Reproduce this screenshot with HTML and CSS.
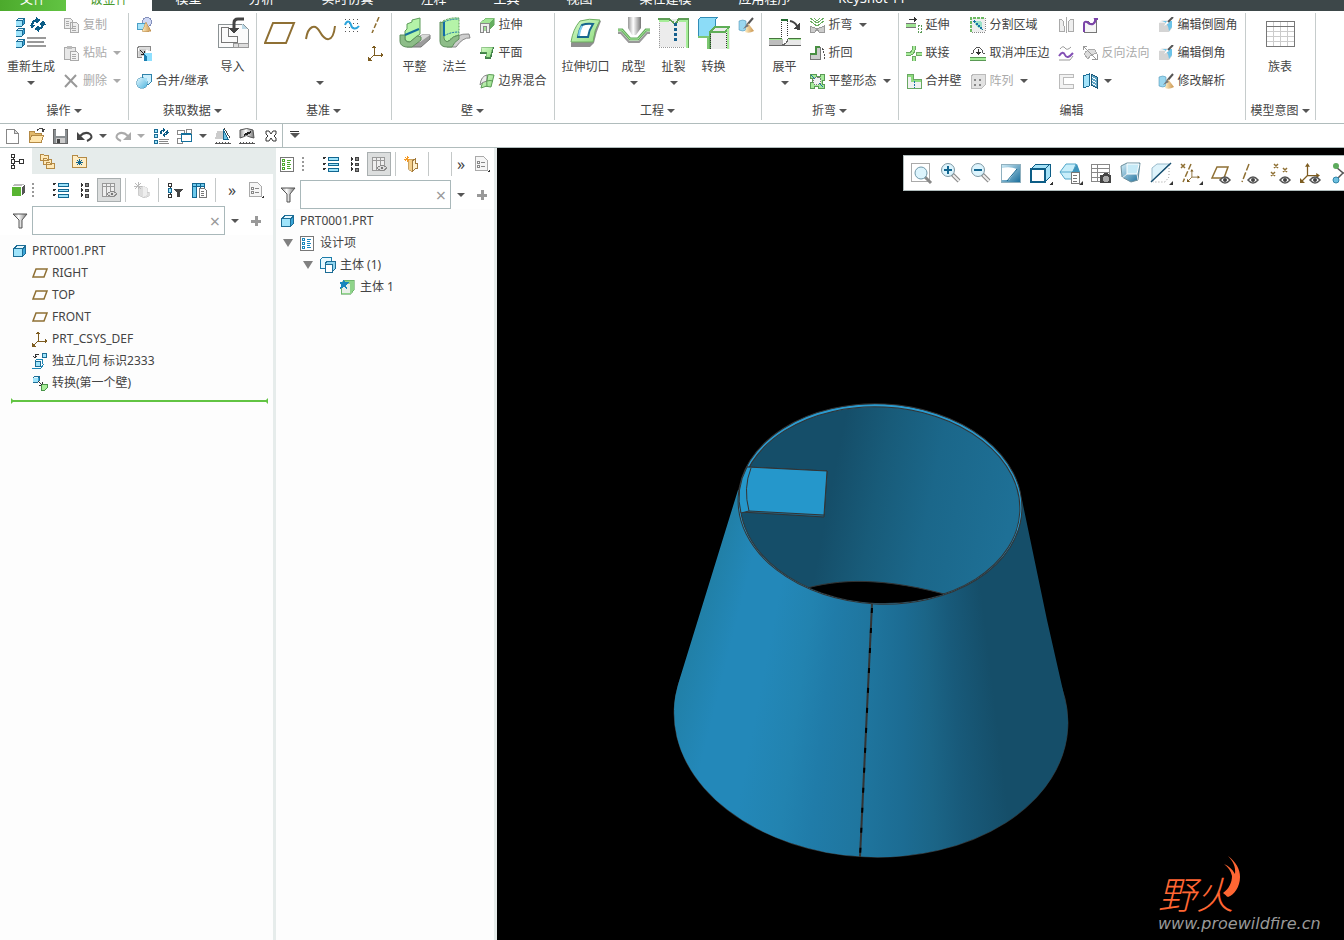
FILE: index.html
```html
<!DOCTYPE html>
<html lang="zh-CN">

<head>
    <meta charset="UTF-8">
    <title>PRT0001</title>
    <link rel="stylesheet" href="styles.css">
</head>

<body>
    <!--图标库-->
    <svg class="sprite" aria-hidden="true">
        <defs>
            <linearGradient id="g-steel"><stop offset="0" stop-color="#999" /><stop offset=".4" stop-color="#fff" /><stop offset="1" stop-color="#777" /></linearGradient>
            <linearGradient id="g-blue" x2="1" y2="1"><stop offset="0" stop-color="#e4f8ff" /><stop offset="1" stop-color="#4db3dd" /></linearGradient>
            <linearGradient id="g-deep" x2="1" y2="1"><stop offset="0" stop-color="#d5f0fa" /><stop offset="1" stop-color="#1c6f9c" /></linearGradient>
            <linearGradient id="g-tan" x2="1" y2="0"><stop offset="0" stop-color="#ffeec2" /><stop offset="1" stop-color="#c8924b" /></linearGradient>
            <linearGradient id="g-green" x2="1" y2="1"><stop offset="0" stop-color="#d8fbcb" /><stop offset="1" stop-color="#8fdc80" /></linearGradient>
        </defs>
        <symbol id="cube" viewBox="0 0 16 16">
            <path d="M1 5l4-3h9v8l-4 4H1z" fill="#1c6d96" />
            <path d="M2 6h8v7H2z" fill="#9fe4fb" />
            <path d="M5 3h8l-3 2H3z" fill="#e6f8fe" />
            <path d="M11 6l2-2v6l-2 2z" fill="#39a5d8" />
        </symbol>
        <symbol id="spin" viewBox="0 0 16 14">
            <path d="M3 8C3 4 5 3 8 3M13 6c0 4-2 5-5 5" fill="none" stroke="#0b5c86" stroke-width="2" />
            <path d="M0 7h6l-3 4zM10 7h6l-3-4zM7 0l4 3-4 3zM9 8l-4 3 4 3z" fill="#0b5c86" />
        </symbol>
        <symbol id="regen" viewBox="0 0 32 32">
            <use href="#cube" width="11" height="11" /><use href="#cube" y="10" width="11" height="11" /><use href="#cube" y="21" width="11" height="11" />
            <use href="#spin" x="14" width="17" height="15" />
            <path d="M12 21h19M12 25h17M12 29h19" stroke="#999" stroke-width="2" />
        </symbol>
        <symbol id="regen-s" viewBox="0 0 16 16">
            <path d="M1 1h3v3H1zM1 6h3v3H1zM1 12h3v3H1z" fill="#9fe4fb" stroke="#1c6d96" />
            <use href="#spin" x="6" width="10" height="9" />
            <path d="M6 11h10M6 13h9M6 15h10" stroke="#888" />
        </symbol>
        <symbol id="copy" viewBox="0 0 16 16">
            <path d="M1 1h6l2 2v8H1zM7 5h6l2 2v8H7z" fill="#eee" stroke="#aaa" />
            <path d="M3 4h3M3 6h3M3 8h3M9 9h4M9 11h4M9 13h4" stroke="#aaa" />
        </symbol>
        <symbol id="paste" viewBox="0 0 16 16">
            <path d="M1 2h11v12H1z" fill="#e8e8e8" stroke="#aaa" />
            <path d="M4 1h5v3H4z" fill="#bbb" />
            <path d="M7 6h6l2 2v7H7z" fill="#f4f4f4" stroke="#aaa" />
            <path d="M9 9h4M9 11h4M9 13h4" stroke="#aaa" />
        </symbol>
        <symbol id="cross" viewBox="0 0 16 16"><path d="M2 2l12 12M13 2L2 14" stroke="#999" stroke-width="2" shape-rendering="auto" /></symbol>
        <symbol id="shapes" viewBox="0 0 16 16">
            <circle cx="11" cy="5" r="4.500" fill="#cfd8f4" stroke="#8490bb" />
            <path d="M1 6h8v6H1z" fill="#a6e3fa" stroke="#4b9fc5" />
            <path d="M10 5l5 9q-5 2-9 0z" fill="url(#g-tan)" stroke="#b98a4a" stroke-width=".5" />
        </symbol>
        <symbol id="shrink" viewBox="0 0 16 16">
            <path d="M1 3l3-2h10v5M1 3v9h5" fill="#ddd" stroke="#888" /><path d="M3 4h7v7H3z" fill="#ccc" />
            <path d="M4 5l4 4M8 6v3H5" stroke="#222" fill="none" />
            <path d="M8 8h8v8h-5v-5H8z" fill="#8fe0ff" /><path d="M8 8v8h3v-4z" fill="#1a7eb0" />
        </symbol>
        <symbol id="merge" viewBox="0 0 16 16">
            <path d="M6 2l2-1h7v8l-2 2H6z" fill="#cdeffc" stroke="#2f83ab" />
            <circle cx="6" cy="10" r="5.500" fill="url(#g-blue)" stroke="#2f83ab" stroke-width=".5" /><path d="M6 5h5v5" fill="#a4def5" />
        </symbol>
        <symbol id="import" viewBox="0 0 32 32">
            <path d="M1 7h25l5 5v18H1z" fill="#fbfbfb" stroke="#8b9294" />
            <path d="M4 10h7v9h9v6H4z" fill="none" stroke="#777" />
            <path d="M25 7v5h6z" fill="#bcd9e6" /><path d="M16 26h15v4H16zM21 26v4" fill="#ddd" stroke="#999" />
            <path d="M27 2H21q-4 0-4 4v8" fill="none" stroke="#444" stroke-width="3" shape-rendering="auto" /><path d="M12 11l5 6 5-6z" fill="#444" />
        </symbol>
        <symbol id="plane" viewBox="0 0 32 32"><path d="M9 6h21l-8 20H1z" fill="none" stroke="#8f7034" stroke-width="2" /></symbol>
        <symbol id="plane-s" viewBox="0 0 16 16"><path d="M4 4h11l-3 8H1z" fill="none" stroke="#8f7034" stroke-width="1.500" shape-rendering="auto" /></symbol>
        <symbol id="curve" viewBox="0 0 32 32"><path d="M2 22C4 9 11 6 16 15S29 27 31 9" fill="none" stroke="#8f7034" stroke-width="2" /></symbol>
        <symbol id="sketch" viewBox="0 0 16 16">
            <path d="M1 2h14M1 6h14M1 10h14M1 14h14" stroke="#555" stroke-dasharray="1 3" />
            <path d="M1 8c2-5 5-4 6 0s5 5 8 1" fill="none" stroke="#2aa4dc" stroke-width="2" shape-rendering="auto" />
        </symbol>
        <symbol id="axis" viewBox="0 0 16 16"><path d="M11 0L4 16" stroke="#8f7034" stroke-width="1.500" stroke-dasharray="5 2" shape-rendering="auto" /></symbol>
        <symbol id="csys" viewBox="0 0 16 16">
            <path d="M6 2v8h9M6 10l-5 5" fill="none" stroke="#7d5c20" />
            <path d="M4 3l2-3 2 3zM13 8l3 2-3 2zM0 12v4h4z" fill="#7d5c20" />
        </symbol>
        <symbol id="wall-flat" viewBox="0 0 32 32">
            <path d="M11 25l12-7h8v4l-9 8H8z" fill="#9b9b9b" stroke="#777" /><path d="M11 25l12-7h8l-10 7z" fill="#d8d8d8" />
            <path d="M8 12V7l5-2V3l8-2v16l-10 8q-4 0-5-3V14z" fill="#b5f3a8" stroke="#5d9b5b" />
            <path d="M1 18h5v4q0 3 5 3l7-6h2l2 1v3l-9 7H7q-6-1-6-6z" fill="#8dbd88" stroke="#5d8f5b" />
            <path d="M6 18l14-6" stroke="#14719d" stroke-width="2" />
        </symbol>
        <symbol id="wall-flange" viewBox="0 0 32 32">
            <path d="M9 27q8-11 21-10l1 4q-7-1-14 9H8z" fill="#cfcfcf" stroke="#888" />
            <path d="M4 4q8-4 16-3v17q-6 1-12 7l-4-3z" fill="#b5f3a8" stroke="#5d9b5b" stroke-dasharray="2 1" />
            <path d="M1 5l4 1v15q1 5 5 3 4-5 10-6v4q-5 3-7 8H8q-7 0-7-6z" fill="#8dbd88" stroke="#5d8f5b" />
            <path d="M5 5v14" stroke="#126ea8" stroke-width="2" /><path d="M5 19q6-4 15-4M5 5q6-3 15-3" fill="none" stroke="#126ea8" stroke-dasharray="2 1" />
        </symbol>
        <symbol id="extrude" viewBox="0 0 16 16">
            <path d="M1 6l6-5h8v7l-5 5H1z" fill="#a2e596" stroke="#5a9a55" stroke-width=".5" /><path d="M11 5l4-3v6l-4 4z" fill="#66ae60" /><path d="M1 6h9v9H7V9H4v6H1z" fill="#eee" stroke="#888" />
        </symbol>
        <symbol id="flat" viewBox="0 0 16 16"><path d="M3 2h12l-3 12H6l1-5H1z" fill="#3f7f49" /><path d="M3 2h11l-3 10H7l1-5H2z" fill="url(#g-green)" stroke="#5a9a55" stroke-width=".5" /></symbol>
        <symbol id="blend" viewBox="0 0 16 16" shape-rendering="auto">
            <path d="M5 4q4-4 10-2l-3 12q-5-2-10 1z" fill="url(#g-green)" stroke="#5a9a55" /><path d="M1 12Q2 3 8 2v6q-5 1-7 4z" fill="#eee" stroke="#888" />
            <path d="M8 8q3-1 6 0M9 2q-2 6-1 12" fill="none" stroke="#5a9a55" />
        </symbol>
        <symbol id="cutout" viewBox="0 0 32 32">
            <path d="M11 5q10-3 20-1-5 11-7 22l-4 4H1v-4z" fill="#8f8f8f" />
            <path d="M10 4q9-3 20-1-6 10-7 22H1Q3 12 10 4z" fill="url(#g-green)" stroke="#6eae62" />
            <path d="M12 8q5-2 11-1-4 6-5 13H8q1-7 4-12z" fill="#fff" stroke="#17668e" stroke-width="2" /><path d="M12 9q-3 5-3 10" fill="none" stroke="#7fd0ef" stroke-width="2" />
        </symbol>
        <symbol id="form" viewBox="0 0 32 32">
            <path d="M10 0h13v11l-5 7h-4l-4-7z" fill="url(#g-steel)" />
            <path d="M0 13h4l8 9h8l8-9h4" fill="none" stroke="#67a960" stroke-width="3" />
            <path d="M0 13h4l8 9h8l8-9h4" fill="none" stroke="#a9ee9c" />
            <path d="M0 16h3l8 9h10l8-9h3" fill="none" stroke="#999" stroke-width="2" />
        </symbol>
        <symbol id="rip" viewBox="0 0 32 32">
            <path d="M1 2h29v28H1z" fill="#ececec" /><path d="M1 4v26h26" fill="none" stroke="#999" stroke-dasharray="1 1" />
            <path d="M0 2h11l5 4M18 6l3-4h10" fill="none" stroke="#5f9e57" stroke-width="2" /><path d="M1 4h10M21 4h8M29 3v28" stroke="#a6ed98" stroke-width="2" /><path d="M30 3v28" stroke="#5f9e57" />
            <path d="M17 6v18" stroke="#155f8d" stroke-width="3" stroke-dasharray="3 2" />
        </symbol>
        <symbol id="convert" viewBox="0 0 32 32">
            <path d="M0 3l3-3h17l-3 3v17H0z" fill="#8cdcf7" stroke="#328db6" /><path d="M0 20h10v12" fill="none" stroke="#7dc773" stroke-width="2" />
            <path d="M12 15l5-5h15v22H12z" fill="#ececec" /><path d="M12 15l5-5h14l-4 5H12v17" fill="none" stroke="#5fae57" stroke-width="2" />
            <path d="M12 17v15M28 16v15" stroke="#333" stroke-dasharray="1 1" /><path d="M30 12v20" stroke="#a6ed98" stroke-width="2" />
        </symbol>
        <symbol id="paint" viewBox="0 0 16 16" shape-rendering="auto">
            <path d="M1 4q4-2 7 0v9q-3 2-7 0z" fill="#9ad7ef" stroke="#3c86aa" stroke-width=".5" /><path d="M15 1L9 8" stroke="#555" stroke-width="2" />
            <path d="M10 6l6 8q-5 3-9 1z" fill="url(#g-tan)" /><path d="M9 7l2 2-6 3z" fill="#777" />
        </symbol>
        <symbol id="unbend" viewBox="0 0 32 32">
            <path d="M0 22h14v6H0z" fill="#bdbdbd" /><path d="M19 22h13v6H14q3 0 5-6z" fill="#e8e8e8" />
            <path d="M0 22h13M20 22h12" stroke="#9fe693" stroke-width="2" /><path d="M0 21h13M19 21h13" stroke="#48733f" /><path d="M0 28h32M13 28q5-1 6-6" fill="none" stroke="#666" />
            <path d="M12 20V3h6v17" fill="none" stroke="#333" stroke-dasharray="1 1" /><path d="M12 3h7" stroke="#246b31" stroke-width="2" />
            <path d="M21 4q5 1 7 5" fill="none" stroke="#444" stroke-width="2" shape-rendering="auto" /><path d="M24 12l7 1V6z" fill="#444" />
        </symbol>
        <symbol id="bend" viewBox="0 0 16 16">
            <path d="M1 4l7 5 7-5M1 1l7 5 7-5M5 1l3 3 3-3" fill="none" stroke="#6cae62" /><path d="M1 9l7 3 7-3v6h-5l-2-3-2 3H1z" fill="#ccc" stroke="#999" />
        </symbol>
        <symbol id="bendback" viewBox="0 0 16 16">
            <path d="M1 9h6V2h4v12H1z" fill="#ccc" stroke="#777" /><path d="M1 9h6V2h4" fill="none" stroke="#498f43" stroke-width="2" />
            <path d="M15 14V8q0-4-3-5" fill="none" stroke="#555" stroke-dasharray="2 1" />
        </symbol>
        <symbol id="flatform" viewBox="0 0 16 16">
            <path d="M1 1h6v2h4V1h4v6h-2v4h2v4H9v-2H5v2H1V9h2V5H1z" fill="#a5ea99" stroke="#5a9a55" /><circle cx="8" cy="8" r="4" fill="#f2f2f2" stroke="#777" stroke-dasharray="1 1" />
            <path d="M2 2l4 4M10 10l4 4" stroke="#1672a3" />
        </symbol>
        <symbol id="extend" viewBox="0 0 16 16">
            <path d="M0 6h10v4H0z" fill="#9de291" /><path d="M0 6h10M0 10h10" stroke="#777" /><path d="M3 2h7" stroke="#333" /><path d="M8 0l3 2-3 3z" fill="#333" />
            <path d="M12 8h3v7h-3z" fill="none" stroke="#5a9a55" stroke-dasharray="2 1" />
        </symbol>
        <symbol id="join" viewBox="0 0 16 16"><path d="M0 9h4q4-1 4-8M10 9h6M8 11v5" fill="none" stroke="#6da765" stroke-width="4" /><path d="M0 9h4q4-1 4-8M11 9h5M8 12v4" fill="none" stroke="#a6ed98" stroke-width="2" /></symbol>
        <symbol id="mergewall" viewBox="0 0 16 16">
            <path d="M1 1h6v5h8v9H1z" fill="#f1f1f1" stroke="#69a862" /><path d="M2 3h4v5h9" fill="none" stroke="#8fdc80" stroke-width="2" />
            <path d="M8 8v7" stroke="#1672a3" stroke-dasharray="2 1" />
        </symbol>
        <symbol id="split" viewBox="0 0 16 16">
            <path d="M1 1h14v14H1z" fill="#eee" /><path d="M1 15V1h14" fill="none" stroke="#6dbb62" stroke-width="2" stroke-dasharray="3 1" /><path d="M15 1v14H1" fill="none" stroke="#888" stroke-dasharray="1 1" />
            <path d="M5 4v4l7 5V5L9 4z" fill="#9be2c8" /><path d="M4 4l9 9" stroke="#1672a3" stroke-width="2" stroke-dasharray="2 1" />
        </symbol>
        <symbol id="unstamp" viewBox="0 0 16 16">
            <path d="M1 9q3 0 3-4Q8 0 12 5q0 4 3 4" fill="none" stroke="#555" /><path d="M8 4v5" stroke="#333" /><path d="M5 7h6l-3 3z" fill="#333" />
            <path d="M0 12h16v3H0z" fill="#a6ed98" /><path d="M0 12h16M0 15h16" stroke="#5a9a55" />
        </symbol>
        <symbol id="pattern" viewBox="0 0 16 16">
            <path d="M1 4l2-3h12v11l-3 3H1z" fill="#e2e2e2" stroke="#bbb" /><path d="M4 7h2M9 7h2M4 12h2M9 12h2" stroke="#888" stroke-width="2" />
        </symbol>
        <symbol id="mirror" viewBox="0 0 16 16"><path d="M1 2q5 0 5 7v5H1zM15 2q-5 0-5 7v5h5z" fill="#eee" stroke="#aaa" /><path d="M8 0v16" stroke="#aaa" /></symbol>
        <symbol id="wrap" viewBox="0 0 16 16"><path d="M2 15V6q3-3 6 0t6-3v12z" fill="#f5f5f5" stroke="#777" /><path d="M2 15V7q0-3 3-2 3 3 6 2 3-2 2-5h3" fill="none" stroke="#7a43a8" stroke-width="2" shape-rendering="auto" /></symbol>
        <symbol id="offset" viewBox="0 0 16 16" shape-rendering="auto">
            <path d="M2 4q3-4 5-1t6-1" fill="none" stroke="#999" /><path d="M1 11q4-6 6-1t8-2" fill="none" stroke="#8350b5" stroke-width="2" /><path d="M1 15h11l3-4" fill="none" stroke="#999" />
        </symbol>
        <symbol id="flip" viewBox="0 0 16 16"><path d="M2 9q5-7 11-4l2 4q-6-1-9 5z" fill="#ddd" stroke="#aaa" /><path d="M1 1l13 13M1 5V1h4M10 14h5v-4" fill="none" stroke="#999" /></symbol>
        <symbol id="bracket" viewBox="0 0 16 16"><path d="M1 1h14v3H5v7h10v4H1z" fill="#f2f2f2" stroke="#bbb" /></symbol>
        <symbol id="section" viewBox="0 0 16 16">
            <path d="M1 3l6-2v12l-6 2z" fill="#a3e3fa" stroke="#1b6c94" /><path d="M9 1l6 3v11l-6-3z" fill="#5fa5c6" stroke="#1b5878" /><path d="M10 4l4 3M10 7l4 3M10 10l4 3" stroke="#fff" stroke-dasharray="1 1" />
        </symbol>
        <symbol id="editround" viewBox="0 0 16 16" shape-rendering="auto">
            <path d="M1 6h8l5-2v7l-3 4H1z" fill="#d4d4d4" /><path d="M1 6l3-3h6L9 6z" fill="#eee" /><path d="M4 4q6 1 7 10l3-4V4z" fill="#6cc3e8" /><path d="M15 0L9 6" stroke="#555" stroke-width="2" /><path d="M9 4l2 2-5 3z" fill="#fff" />
        </symbol>
        <symbol id="table" viewBox="0 0 32 32">
            <path d="M2 4h28v25H2z" fill="#fff" stroke="#777" /><path d="M2 14h28M2 19h28M2 24h28M9 4v25M16 4v25M23 4v25" stroke="#ccc" /><path d="M2 4h28v25H2zM2 9h28" fill="none" stroke="#777" />
        </symbol>
        <symbol id="new" viewBox="0 0 16 16"><path d="M1 1h8l4 4v10H1z" fill="#fff" stroke="#888" /><path d="M9 1v4h4z" fill="#ddd" stroke="#888" /></symbol>
        <symbol id="open" viewBox="0 0 16 16">
            <path d="M0 14V3h5l1 2h6v9z" fill="#e2b96b" stroke="#b48a45" /><path d="M0 14l3-7h12l-3 7z" fill="#ffe6ae" stroke="#b48a45" /><path d="M8 3q1-3 5-2" fill="none" stroke="#444" /><path d="M12 0l4 1-2 4z" fill="#444" />
        </symbol>
        <symbol id="save" viewBox="0 0 16 16"><path d="M0 1h14v14H0z" fill="#8a8f92" stroke="#666" /><path d="M3 1h9v7H3z" fill="#fff" /><path d="M3 10h9v5H3z" fill="#ccc" /><path d="M4 11h3v4H4z" fill="#444" /></symbol>
        <symbol id="undo" viewBox="0 0 16 16" shape-rendering="auto"><path d="M3 8q5-5 10-2 4 4-3 7" fill="none" stroke="currentColor" stroke-width="2" /><path d="M0 4v8h8z" fill="currentColor" /></symbol>
        <symbol id="windows" viewBox="0 0 16 16">
            <path d="M0 2h7v4H0zM9 1h5v4H9zM0 10h5v5H0z" fill="#fff" stroke="#888" /><path d="M4 6h10v7H4z" fill="#fff" stroke="#14709c" /><path d="M4 6h10" stroke="#14709c" stroke-width="2" />
        </symbol>
        <symbol id="measure" viewBox="0 0 16 16">
            <path d="M2 3h6v8H0z" fill="#ccc" /><path d="M8 1l5 10H8z" fill="#6dc4e8" stroke="#17668e" /><path d="M9 0l6 10" stroke="#444" /><path d="M0 15h16" stroke="#555" /><path d="M1 14h15" stroke="#555" stroke-dasharray="1 2" />
        </symbol>
        <symbol id="gauge" viewBox="0 0 16 16">
            <path d="M1 2q7-3 13 0l1 8-4-1q-4-3-7 0l-3 1z" fill="url(#g-steel)" stroke="#555" shape-rendering="auto" /><path d="M5 7l7-3" stroke="#222" stroke-width="2" /><path d="M0 15h16" stroke="#555" /><path d="M1 14h15" stroke="#555" stroke-dasharray="1 2" />
        </symbol>
        <symbol id="closewin" viewBox="0 0 16 16"><path d="M3 3h3l2 3 2-3h3v3l-2 2 2 2v3h-3l-2-3-2 3H3v-3l2-2-2-2z" fill="#fff" stroke="#333" shape-rendering="auto" /></symbol>
        <symbol id="tree" viewBox="0 0 16 16"><path d="M5 4v2M5 10v2M7 8h4" stroke="#333" /><path d="M3 1h3v3H3zM3 6h3v4H3zM3 12h3v3H3zM11 6h4v4h-4z" fill="#fff" stroke="#333" /></symbol>
        <symbol id="folders" viewBox="0 0 16 16"><path d="M0 1h3l1 1h4v5H0zM3 5h3l1 1h4v5H3zM6 9h3l1 1h4v5H6z" fill="#ffe9b8" stroke="#b48a45" /></symbol>
        <symbol id="favorite" viewBox="0 0 16 16"><path d="M0 2h5l1 2h8v10H0z" fill="#ffedc4" stroke="#b48a45" /><path d="M7 6v6M4 9h7M5 7l5 5M10 7l-5 5" stroke="#126690" /></symbol>
        <symbol id="greencube" viewBox="0 0 16 16"><path d="M2 5h9v9H2z" fill="#58b431" /><path d="M2 4l3-2h10l-4 2z" fill="#bbb" /><path d="M12 5l3-3v8l-3 4z" fill="#555" /></symbol>
        <symbol id="rows" viewBox="0 0 16 16"><path d="M5 1h10v3H5zM5 7h10v2H5zM5 12h10v3H5z" fill="#9fe4fb" stroke="#126690" /><path d="M0 1h3L1 4zM0 7h3l-2 3zM0 12h3l-2 3z" fill="#333" /></symbol>
        <symbol id="nodes" viewBox="0 0 16 16"><path d="M8 1h3v3H8zM8 7h3v2H8zM8 12h3v3H8z" fill="#888" stroke="#444" /><path d="M4 1l2 2-2 2zM4 6l2 2-2 2zM4 11l2 2-2 2z" fill="#333" /></symbol>
        <symbol id="columns" viewBox="0 0 16 16"><path d="M1 1h12v13H1zM1 4h12M5 1v13M9 1v13" fill="#eee" stroke="#999" /><path d="M6 12q5-5 10 0-5 5-10 0z" fill="#ddd" stroke="#888" /><path d="M10 11h2v2h-2z" fill="#777" /></symbol>
        <symbol id="part" viewBox="0 0 16 16"><path d="M4 4h5l4 2v5l2-1v4l-5 2-6-3z" fill="currentColor" stroke="#bbb" stroke-width=".5" /><path d="M9 4l4 2v7l-4 2z" fill="#fff" fill-opacity=".5" /><path d="M4 0v7M0 4h8M1 1l6 6M7 1L1 7" stroke="#bbb" /></symbol>
        <symbol id="partnew" viewBox="0 0 16 16"><path d="M4 3h6v11l-2 2-4-3z" fill="#f4cf8b" stroke="#a27a3c" stroke-width=".5" /><path d="M8 5l3-2v4q3 0 3 3t-3 3l-3 3z" fill="#fff0cc" stroke="#a27a3c" /><path d="M3 0v6M0 3h6M1 1l4 4M5 1L1 5" stroke="#f59a23" /></symbol>
        <symbol id="treefilter" viewBox="0 0 16 16"><path d="M3 4v9" stroke="#333" /><path d="M1 1h3v3H1zM1 12h3v3H1z" fill="#fff" stroke="#333" /><path d="M1 6h3v4H1z" fill="#9fe4fb" stroke="#126690" /><path d="M7 7h9l-3 4v4h-3v-4z" fill="#444" /></symbol>
        <symbol id="treecolumns" viewBox="0 0 16 16"><path d="M1 1h12v14H1z" fill="#fff" /><path d="M1 1h4v14H1zM1 1h12v3H1z" fill="#6dc9ec" stroke="#126690" /><path d="M9 1v6M13 1v5" stroke="#126690" /><path d="M8 6h5l2 2v7H8z" fill="#fff" stroke="#777" /><path d="M10 9h3M10 11h3M10 13h3" stroke="#777" /></symbol>
        <symbol id="doc" viewBox="0 0 16 16"><path d="M1 0h8l4 4v10H1z" fill="#f6f6f6" stroke="#aaa" /><path d="M3 5h2v2H3zM3 9h2v2H3z" fill="#fff" stroke="#888" /><path d="M7 6h4M7 10h4" stroke="#888" /><path d="M16 13v3h-3z" fill="#333" /></symbol>
        <symbol id="filter" viewBox="0 0 16 16" shape-rendering="auto"><path d="M1 1h14l-5 6v8H7V7z" fill="url(#g-steel)" stroke="#555" /></symbol>
        <symbol id="plus" viewBox="0 0 12 12"><path d="M6 1v10M1 6h10" stroke="#999" stroke-width="3" /></symbol>
        <symbol id="list" viewBox="0 0 16 16"><path d="M0 1h13v14H0z" fill="#fff" stroke="#777" /><path d="M2 3h2v2H2zM2 7h2v2H2zM2 11h2v2H2z" fill="#fff" stroke="currentColor" /><path d="M7 4h4M7 6h3M7 8h4M7 10h3M7 12h4" stroke="currentColor" /></symbol>
        <symbol id="bodies" viewBox="0 0 16 16"><path d="M0 3l3-3h8v9l-3 2H0z" fill="#e6f8fe" stroke="#1c7ca9" /><path d="M5 7l2-3h8v8l-3 3H5z" fill="#8fd4ef" stroke="#1c6d96" /><path d="M5 7h7v8H5z" fill="#fff" stroke="#1c6d96" /></symbol>
        <symbol id="body" viewBox="0 0 16 16"><path d="M1 4l3-3h10v10l-3 4H1z" fill="#8fd48a" stroke="#4a964a" stroke-width=".5" /><path d="M2 5h8v9H2z" fill="#e9efe8" /><path d="M4 0l1 3h4L6 6l1 4-3-2-4 2 1-4-2-3h4z" fill="#1a86bd" /></symbol>
        <symbol id="geom" viewBox="0 0 16 16"><path d="M10 0h4v4h-4z" fill="#9fe4fb" stroke="#1c6d96" /><path d="M3 8h5v5H3z" fill="#9fe4fb" stroke="#1c6d96" /><path d="M3 8l2-2h5v5" fill="none" stroke="#1c86b5" /><path d="M0 15h9l3-4" fill="none" stroke="#1c86b5" /><path d="M7 1H3v4M1 3l2 2 2-2" fill="none" stroke="#333" /></symbol>
        <symbol id="firstwall" viewBox="0 0 16 16"><use href="#cube" width="9" height="9" /><path d="M6 6l4 4M10 7v3H7" fill="none" stroke="#333" /><path d="M9 11l2-2h4v4l-2 2H9z" fill="#a9ee99" stroke="#4a964a" /></symbol>
        <symbol id="eye" viewBox="0 0 12 8"><path d="M1 4q5-6 10 0-5 6-10 0z" fill="#fff" stroke="#555" stroke-width="1.500" /><circle cx="6" cy="4" r="2" fill="#444" /></symbol>
        <symbol id="corner" viewBox="0 0 4 4"><path d="M4 0v4H0z" fill="#333" /></symbol>
        <symbol id="lens" viewBox="0 0 24 24"><path d="M13 13l7 7" stroke="#888" stroke-width="4" /><path d="M14 14l6 6" stroke="#eee" stroke-width="2" /><circle cx="9" cy="9" r="6.500" fill="#dcf4fd" stroke="#7d97a3" /></symbol>
    </svg>

    <nav class="tabs">
        <a class="tab tab-file" href="#">文件</a>
        <a class="tab tab-active" href="#">钣金件</a>
        <a class="tab" href="#">模型</a>
        <a class="tab" href="#">分析</a>
        <a class="tab tab-wide" href="#">实时仿真</a>
        <a class="tab" href="#">注释</a>
        <a class="tab" href="#">工具</a>
        <a class="tab" href="#">视图</a>
        <a class="tab tab-wide" href="#">柔性建模</a>
        <a class="tab tab-wide" href="#">应用程序</a>
        <a class="tab tab-wider" href="#">KeyShot 11</a>
    </nav>

    <div class="ribbon">
        <section class="group">
            <div class="group-body">
                <button class="big"><svg class="icon32 crisp"><use href="#regen" /></svg><span>重新生成</span><i class="caret"></i></button>
                <div class="stack">
                    <button class="small" disabled><svg class="icon"><use href="#copy" /></svg>复制</button>
                    <button class="small" disabled><svg class="icon"><use href="#paste" /></svg>粘贴<i class="caret"></i></button>
                    <button class="small" disabled><svg class="icon"><use href="#cross" /></svg>删除<i class="caret"></i></button>
                </div>
            </div>
            <button class="group-name">操作<i class="caret"></i></button>
        </section>
        <section class="group">
            <div class="group-body">
                <div class="stack">
                    <button class="small" aria-label="用户定义特征"><svg class="icon"><use href="#shapes" /></svg></button>
                    <button class="small" aria-label="收缩包络"><svg class="icon"><use href="#shrink" /></svg></button>
                    <button class="small"><svg class="icon"><use href="#merge" /></svg>合并/继承</button>
                </div>
                <button class="big"><svg class="icon32 crisp"><use href="#import" /></svg><span>导入</span></button>
            </div>
            <button class="group-name">获取数据<i class="caret"></i></button>
        </section>
        <section class="group">
            <div class="group-body">
                <button class="big" aria-label="平面基准"><svg class="icon32"><use href="#plane" /></svg></button>
                <button class="big" aria-label="曲线"><svg class="icon32"><use href="#curve" /></svg><span></span><i class="caret"></i></button>
                <div class="stack">
                    <button class="small" aria-label="草绘"><svg class="icon"><use href="#sketch" /></svg></button>
                </div>
                <div class="stack">
                    <button class="small" aria-label="轴"><svg class="icon"><use href="#axis" /></svg></button>
                    <button class="small" aria-label="坐标系"><svg class="icon"><use href="#csys" /></svg></button>
                </div>
            </div>
            <button class="group-name">基准<i class="caret"></i></button>
        </section>
        <section class="group">
            <div class="group-body">
                <button class="big"><svg class="icon32"><use href="#wall-flat" /></svg><span>平整</span></button>
                <button class="big"><svg class="icon32"><use href="#wall-flange" /></svg><span>法兰</span></button>
                <div class="stack">
                    <button class="small"><svg class="icon"><use href="#extrude" /></svg>拉伸</button>
                    <button class="small"><svg class="icon"><use href="#flat" /></svg>平面</button>
                    <button class="small"><svg class="icon"><use href="#blend" /></svg>边界混合</button>
                </div>
            </div>
            <button class="group-name">壁<i class="caret"></i></button>
        </section>
        <section class="group">
            <div class="group-body">
                <button class="big"><svg class="icon32"><use href="#cutout" /></svg><span>拉伸切口</span></button>
                <button class="big"><svg class="icon32"><use href="#form" /></svg><span>成型</span><i class="caret"></i></button>
                <button class="big"><svg class="icon32 crisp"><use href="#rip" /></svg><span>扯裂</span><i class="caret"></i></button>
                <button class="big"><svg class="icon32 crisp"><use href="#convert" /></svg><span>转换</span></button>
                <div class="stack">
                    <button class="small" aria-label="修改解析"><svg class="icon"><use href="#paint" /></svg></button>
                </div>
            </div>
            <button class="group-name">工程<i class="caret"></i></button>
        </section>
        <section class="group">
            <div class="group-body">
                <button class="big"><svg class="icon32 crisp"><use href="#unbend" /></svg><span>展平</span><i class="caret"></i></button>
                <div class="stack">
                    <button class="small"><svg class="icon"><use href="#bend" /></svg>折弯<i class="caret"></i></button>
                    <button class="small"><svg class="icon"><use href="#bendback" /></svg>折回</button>
                    <button class="small"><svg class="icon"><use href="#flatform" /></svg>平整形态<i class="caret"></i></button>
                </div>
            </div>
            <button class="group-name">折弯<i class="caret"></i></button>
        </section>
        <section class="group">
            <div class="group-body">
                <div class="stack">
                    <button class="small"><svg class="icon"><use href="#extend" /></svg>延伸</button>
                    <button class="small"><svg class="icon"><use href="#join" /></svg>联接</button>
                    <button class="small"><svg class="icon"><use href="#mergewall" /></svg>合并壁</button>
                </div>
                <div class="stack">
                    <button class="small"><svg class="icon"><use href="#split" /></svg>分割区域</button>
                    <button class="small"><svg class="icon"><use href="#unstamp" /></svg>取消冲压边</button>
                    <button class="small part-disabled"><svg class="icon"><use href="#pattern" /></svg>阵列<i class="caret"></i></button>
                </div>
                <div class="stack">
                    <button class="small" disabled aria-label="镜像"><svg class="icon"><use href="#mirror" /></svg></button>
                    <button class="small" aria-label="偏移"><svg class="icon"><use href="#offset" /></svg></button>
                    <button class="small" disabled aria-label="加厚"><svg class="icon"><use href="#bracket" /></svg></button>
                </div>
                <div class="stack">
                    <button class="small" aria-label="包络"><svg class="icon"><use href="#wrap" /></svg></button>
                    <button class="small" disabled><svg class="icon"><use href="#flip" /></svg>反向法向</button>
                    <button class="small" aria-label="截面"><svg class="icon"><use href="#section" /></svg><i class="caret"></i></button>
                </div>
                <div class="stack">
                    <button class="small"><svg class="icon"><use href="#editround" /></svg>编辑倒圆角</button>
                    <button class="small"><svg class="icon"><use href="#editround" /></svg>编辑倒角</button>
                    <button class="small"><svg class="icon"><use href="#paint" /></svg>修改解析</button>
                </div>
            </div>
            <div class="group-name">编辑</div>
        </section>
        <section class="group">
            <div class="group-body">
                <button class="big"><svg class="icon32 crisp"><use href="#table" /></svg><span>族表</span></button>
            </div>
            <button class="group-name">模型意图<i class="caret"></i></button>
        </section>
    </div>

    <div class="quick">
        <button aria-label="新建"><svg class="icon"><use href="#new" /></svg></button>
        <button aria-label="打开"><svg class="icon"><use href="#open" /></svg></button>
        <button aria-label="保存"><svg class="icon"><use href="#save" /></svg></button>
        <button aria-label="撤消"><svg class="icon"><use href="#undo" /></svg><i class="caret"></i></button>
        <button aria-label="重做" disabled><svg class="icon mirrored"><use href="#undo" /></svg><i class="caret"></i></button>
        <button aria-label="重新生成"><svg class="icon"><use href="#regen-s" /></svg></button>
        <button aria-label="窗口"><svg class="icon"><use href="#windows" /></svg><i class="caret"></i></button>
        <button aria-label="测量"><svg class="icon"><use href="#measure" /></svg></button>
        <button aria-label="分析"><svg class="icon"><use href="#gauge" /></svg></button>
        <button aria-label="关闭"><svg class="icon"><use href="#closewin" /></svg></button>
        <button class="quick-more" aria-label="自定义"><i class="caret"></i></button>
    </div>

    <main class="work">
        <aside class="panel panel-model">
            <div class="panel-tabs">
                <button class="selected" aria-label="模型树"><svg class="icon"><use href="#tree" /></svg></button>
                <button aria-label="文件夹浏览器"><svg class="icon"><use href="#folders" /></svg></button>
                <button aria-label="收藏夹"><svg class="icon"><use href="#favorite" /></svg></button>
            </div>
            <div class="tools">
                <button aria-label="模型"><svg class="icon"><use href="#greencube" /></svg></button>
                <span class="grip"></span>
                <button aria-label="全部展开"><svg class="icon"><use href="#rows" /></svg></button>
                <button aria-label="全部折叠"><svg class="icon"><use href="#nodes" /></svg></button>
                <button class="pressed" aria-label="显示列"><svg class="icon"><use href="#columns" /></svg></button>
                <span class="sep"></span>
                <button class="faded" aria-label="新建零件"><svg class="icon"><use href="#part" /></svg></button>
                <span class="sep"></span>
                <button aria-label="树过滤器"><svg class="icon"><use href="#treefilter" /></svg></button>
                <button aria-label="树列"><svg class="icon"><use href="#treecolumns" /></svg></button>
                <span class="sep"></span>
                <button aria-label="更多">»</button>
                <button aria-label="设置"><svg class="icon"><use href="#doc" /></svg></button>
            </div>
            <div class="search">
                <label for="model-filter" aria-label="过滤"><svg class="icon"><use href="#filter" /></svg></label>
                <div class="field"><input id="model-filter" type="text"><button aria-label="清除">×</button></div>
                <button aria-label="选项"><i class="caret"></i></button>
                <button aria-label="添加"><svg class="icon12"><use href="#plus" /></svg></button>
            </div>
            <ul class="tree">
                <li>
                    <div class="node"><svg class="icon"><use href="#cube" /></svg>PRT0001.PRT</div>
                    <ul>
                        <li class="node"><svg class="icon"><use href="#plane-s" /></svg>RIGHT</li>
                        <li class="node"><svg class="icon"><use href="#plane-s" /></svg>TOP</li>
                        <li class="node"><svg class="icon"><use href="#plane-s" /></svg>FRONT</li>
                        <li class="node"><svg class="icon"><use href="#csys" /></svg>PRT_CSYS_DEF</li>
                        <li class="node"><svg class="icon"><use href="#geom" /></svg>独立几何 标识2333</li>
                        <li class="node"><svg class="icon"><use href="#firstwall" /></svg>转换(第一个壁)</li>
                    </ul>
                </li>
            </ul>
            <div class="insert-here"></div>
        </aside>

        <aside class="panel panel-design">
            <div class="tools">
                <button class="green" aria-label="设计树"><svg class="icon"><use href="#list" /></svg></button>
                <span class="grip"></span>
                <button aria-label="全部展开"><svg class="icon"><use href="#rows" /></svg></button>
                <button aria-label="全部折叠"><svg class="icon"><use href="#nodes" /></svg></button>
                <button class="pressed" aria-label="显示列"><svg class="icon"><use href="#columns" /></svg></button>
                <span class="sep"></span>
                <button aria-label="新建主体"><svg class="icon"><use href="#partnew" /></svg></button>
                <span class="sep"></span>
                <span class="sep push"></span>
                <button class="narrow" aria-label="更多">»</button>
                <button aria-label="设置"><svg class="icon"><use href="#doc" /></svg></button>
            </div>
            <div class="search">
                <label for="design-filter" aria-label="过滤"><svg class="icon"><use href="#filter" /></svg></label>
                <div class="field"><input id="design-filter" type="text"><button aria-label="清除">×</button></div>
                <button aria-label="选项"><i class="caret"></i></button>
                <button aria-label="添加"><svg class="icon12"><use href="#plus" /></svg></button>
            </div>
            <ul class="tree">
                <li>
                    <div class="node"><svg class="icon"><use href="#cube" /></svg>PRT0001.PRT</div>
                    <ul>
                        <li>
                            <div class="node"><button class="twist" aria-label="折叠"></button><svg class="icon blue"><use href="#list" /></svg>设计项</div>
                            <ul>
                                <li>
                                    <div class="node"><button class="twist" aria-label="折叠"></button><svg class="icon"><use href="#bodies" /></svg>主体 (1)</div>
                                    <ul>
                                        <li class="node"><svg class="icon"><use href="#body" /></svg>主体 1</li>
                                    </ul>
                                </li>
                            </ul>
                        </li>
                    </ul>
                </li>
            </ul>
        </aside>

        <section class="viewport">
            <!--圆锥钣金模型-->
            <svg class="scene" viewBox="497 148 847 792">
                <defs>
                    <linearGradient id="g-inner" gradientUnits="userSpaceOnUse" x1="832" y1="480" x2="1012" y2="506">
                        <stop offset="0" stop-color="#154e69" /><stop offset=".25" stop-color="#185b79" /><stop offset=".55" stop-color="#1b678a" /><stop offset="1" stop-color="#1e7096" />
                    </linearGradient>
                    <clipPath id="c-cone">
                        <path d="M738 490L680 678Q674 697 674 710L870 780L1068 724Q1068 712 1064 695L1047 620L1022 500L880 420z" />
                        <ellipse cx="871" cy="718" rx="197" ry="139" transform="rotate(2.700 871 718)" />
                    </clipPath>
                    <clipPath id="c-hole"><ellipse cx="880" cy="505" rx="140" ry="98" transform="rotate(2.800 880 505)" /></clipPath>
                </defs>
                <ellipse cx="871" cy="718" rx="197" ry="139" transform="rotate(2.700 871 718)" fill="none" stroke="#333" />
                <g clip-path="url(#c-cone)">
                    <foreignObject x="660" y="400" width="420" height="470"><div class="cone-side"></div></foreignObject>
                </g>
                <ellipse cx="880" cy="504" rx="142" ry="100" transform="rotate(2.800 880 504)" fill="#2a9bd0" stroke="#333" />
                <ellipse cx="880" cy="505" rx="140" ry="98" transform="rotate(2.800 880 505)" fill="url(#g-inner)" stroke="#333" />
                <path d="M800 590C840 578 885 577 955 597V612H800z" fill="#000" stroke="#333" clip-path="url(#c-hole)" />
                <path d="M747 467L827 471L824 517L741 512Q736 490 747 467z" fill="#1d6a8f" stroke="#333" />
                <path d="M747 467L827 471L824 515L749 511L741 513Q735 490 747 467z" fill="#2597cb" stroke="#333" />
                <path d="M751 468Q743 488 749 511" fill="none" stroke="#333" />
                <path d="M872 604L860 857" stroke="#333" stroke-width="2" />
                <path d="M872 608L860 857" stroke="#000" stroke-width="2" stroke-dasharray="5 15" />
            </svg>

            <div class="view-tools">
                <button aria-label="重新调整"><svg class="icon24" viewBox="0 0 24 24"><path d="M2 2h18v18H2z" fill="#fff" stroke="#aaa" shape-rendering="crispEdges" /><path d="M15 15l7 7" stroke="#888" stroke-width="3" /><circle cx="12" cy="12" r="6" fill="#dcf4fd" stroke="#6f98aa" /></svg></button>
                <button aria-label="放大"><svg class="icon24" viewBox="0 0 24 24"><use href="#lens" /><path d="M9 5v8M5 9h8" stroke="#126690" stroke-width="2" /></svg></button>
                <button aria-label="缩小"><svg class="icon24" viewBox="0 0 24 24"><use href="#lens" /><path d="M5 9h8" stroke="#126690" stroke-width="2" /></svg></button>
                <button aria-label="重画"><svg class="icon24" viewBox="0 0 24 24"><path d="M2 3h19v18H2z" fill="url(#g-deep)" stroke="#8fb0bf" shape-rendering="crispEdges" /><path d="M3 7q8-2 15 1l-8 11H3z" fill="#fff" /><path d="M18 8L8 20" stroke="#126690" /></svg></button>
                <button aria-label="显示样式"><svg class="icon24 crisp" viewBox="0 0 24 24"><path d="M2 8l5-5h14v13l-5 5H2z" fill="#a5e2f8" stroke="#0d5d86" /><path d="M2 8h14v13H2z" fill="#fff" stroke="#0d5d86" stroke-width="2" /><path d="M16 8l5-5" stroke="#0d5d86" /><use href="#corner" x="20" y="20" width="4" height="4" /></svg></button>
                <button aria-label="已保存方向"><svg class="icon24" viewBox="0 0 24 24"><path d="M7 3h10l3 8-4 7H6l-5-7z" fill="#c8eefa" stroke="#51a6c9" /><path d="M1 11h13l3-8" fill="none" stroke="#51a6c9" /><path d="M13 11l5-8 3 8v5h-8z" fill="#3e94bc" /><path d="M12 11h8v11h-8z" fill="#fff" stroke="#777" shape-rendering="crispEdges" /><path d="M14 14h4M14 17h4M14 20h4" stroke="#777" shape-rendering="crispEdges" /><use href="#corner" x="20" y="20" width="4" height="4" /></svg></button>
                <button aria-label="视图管理器"><svg class="icon24 crisp" viewBox="0 0 24 24"><path d="M2 3h18v17H2zM2 7h18M2 11h18M2 16h18M8 3v17" fill="#fff" stroke="#888" /><path d="M11 14h3l1-2h4l1 2h2v8H11z" fill="#444" /><circle cx="17" cy="18" r="3" fill="#aaa" /></svg></button>
                <button aria-label="透视图"><svg class="icon24" viewBox="0 0 24 24"><path d="M2 5l6-3h13l-2 17-7 2-9-5z" fill="url(#g-deep)" stroke="#6c8e9b" /><path d="M8 3h12l-2 10H8z" fill="#c5eaf7" stroke="#fff" /><path d="M8 13l-5 4M18 13l1 6" stroke="#eee" /></svg></button>
                <button aria-label="截面"><svg class="icon24" viewBox="0 0 24 24"><path d="M3 7l5-4h12L3 20z" fill="#def3fb" stroke="#9bc" /><path d="M20 4v12l-4 5H4" fill="none" stroke="#999" stroke-dasharray="1 2" /><path d="M22 2L2 21" stroke="#174f70" stroke-width="1.500" /><use href="#corner" x="20" y="20" width="4" height="4" /></svg></button>
                <button aria-label="基准显示"><svg class="icon24" viewBox="0 0 24 24"><path d="M2 3l4 4M6 3L2 7M12 3L4 21" stroke="#8f7034" stroke-width="1.500" stroke-dasharray="6 2" /><use href="#csys" x="8" y="8" width="13" height="13" /><use href="#corner" x="20" y="20" width="4" height="4" /></svg></button>
                <button aria-label="平面显示"><svg class="icon24" viewBox="0 0 24 24"><path d="M8 6h11l-4 11H3z" fill="none" stroke="#8f7034" stroke-width="1.500" /><use href="#eye" x="10" y="15" width="12" height="8" /></svg></button>
                <button aria-label="轴显示"><svg class="icon24" viewBox="0 0 24 24"><path d="M10 3L3 21" stroke="#8f7034" stroke-width="1.500" stroke-dasharray="7 2" /><use href="#eye" x="8" y="15" width="12" height="8" /></svg></button>
                <button aria-label="点显示"><svg class="icon24" viewBox="0 0 24 24"><path d="M5 3l4 4M9 3L5 7M14 7l4 4M18 7l-4 4M2 11l4 4M6 11l-4 4" stroke="#8f7034" stroke-width="1.500" /><use href="#eye" x="10" y="15" width="12" height="8" /></svg></button>
                <button aria-label="坐标系显示"><svg class="icon24" viewBox="0 0 24 24"><use href="#csys" x="1" y="2" width="20" height="20" /><use href="#eye" x="10" y="15" width="12" height="8" /></svg></button>
                <button aria-label="注释显示"><svg class="icon24" viewBox="0 0 24 24"><path d="M7 6l7 6-7 7M14 12h8" fill="none" stroke="#555" stroke-width="1.500" /><circle cx="7" cy="5" r="3" fill="#5cab5c" /><circle cx="7" cy="19" r="3" fill="#6cc0e0" stroke="#3185a9" /></svg></button>
            </div>

            <div class="logo">
                <div class="logo-name">野火<svg class="flame" viewBox="0 0 20 44"><path d="M6 0C14 6 18 13 18 21 18 31 12 39 6 41L1 37C7 33 10 26 10 20 9 15 6 11 2 8 7 10 10 13 13 18 14 11 11 5 6 0z" fill="#f63" /></svg></div>
                <div class="logo-site">www.proewildfire.cn</div>
            </div>
        </section>
    </main>
</body>

</html>
```

FILE: styles.css
```css
* {
    box-sizing: border-box;
}

body {
    display: flex;
    flex-direction: column;
    margin: 0;
    height: 100vh;
    overflow: hidden;
    background: #fff;
    color: #444;
    font: 12px/16px "Noto Sans", "Noto Sans CJK SC", sans-serif;
}

button {
    display: flex;
    align-items: center;
    justify-content: center;
    padding: 0;
    border: 0;
    background: none;
    color: inherit;
    font: inherit;
    white-space: nowrap;
}

ul {
    margin: 0;
    padding: 0;
    list-style: none;
}

svg {
    flex: none;
    display: block;
}

.sprite {
    position: absolute;
    width: 0;
    height: 0;
}

.icon {
    width: 16px;
    height: 16px;
    shape-rendering: crispEdges;
}

.icon12 {
    width: 12px;
    height: 12px;
    shape-rendering: crispEdges;
}

.icon24 {
    width: 24px;
    height: 24px;
}

.icon32 {
    width: 32px;
    height: 32px;
}

.crisp {
    shape-rendering: crispEdges;
}

.mirrored {
    transform: scaleX(-1);
}

.caret {
    flex: none;
    border: 4px solid transparent;
    border-top-color: #555;
    border-bottom: 0;
}

button:disabled {
    color: #aaa;
}

button:disabled .caret {
    border-top-color: #aaa;
}

/* 选项卡 */
.tabs {
    display: flex;
    flex: none;
    height: 11px;
    overflow: hidden;
    background: #3d4749;
}

.tab {
    display: flex;
    align-items: flex-end;
    justify-content: center;
    flex: none;
    width: 73px;
    padding-bottom: 5px;
    color: #fff;
    font-size: 13px;
    text-decoration: none;
}

.tab-wide {
    width: 99px;
}

.tab-wider {
    width: 116px;
}

.tab-file {
    width: 66px;
    background: linear-gradient(90deg, #4caa2c, #62c443);
}

.tab-active {
    width: 86px;
    background: #fff;
    color: #4a9a2e;
}

/* 功能区 */
.ribbon {
    display: flex;
    flex: none;
    padding: 2px 0 3px;
    border-bottom: 1px solid #b0bcbc;
}

.group {
    display: flex;
    flex-direction: column;
    height: 107px;
    border-right: 1px solid #c6cccc;
}

.group-body {
    display: flex;
    justify-content: center;
    gap: 8px;
    height: 84px;
    margin-top: -2px;
    padding: 0 7px;
}

.big {
    flex-direction: column;
    justify-content: flex-start;
    min-width: 32px;
    padding-top: 6px;
}

.big span {
    height: 16px;
    margin: 10px 0 6px;
}

.stack {
    display: grid;
    grid-template-rows: repeat(3, 28px);
    justify-items: start;
}

.small {
    gap: 4px;
    line-height: 18px;
}

.small .caret {
    margin-left: 2px;
}

.part-disabled {
    color: #aaa;
}

.group-name {
    display: flex;
    align-items: center;
    justify-content: center;
    gap: 3px;
    flex: 1;
    padding: 6px 5px 0;
}

/* 快速访问工具栏 */
.quick {
    display: flex;
    flex: none;
    gap: 8px;
    height: 24px;
    padding-left: 5px;
    border-bottom: 1px solid #b0bcbc;
}

.quick button {
    gap: 6px;
}

.quick .quick-more {
    margin-left: -5px;
    padding-left: 7px;
    border-left: 1px solid #b0bcbc;
}

.quick-more .caret {
    position: relative;
    border-width: 5px 5px 0;
}

.quick-more .caret::before {
    content: "";
    position: absolute;
    left: -5px;
    top: -7px;
    width: 9px;
    height: 1px;
    background: #333;
}

/* 工作区 */
.work {
    display: flex;
    flex: 1;
    min-height: 0;
}

.panel {
    flex: none;
    background: #fdfdfd;
    border-right: 3px solid #e6eceb;
}

.panel-model {
    width: 276px;
}

.panel-design {
    width: 221px;
}

.panel-tabs {
    display: flex;
    height: 26px;
    background: #e6eceb;
}

.panel-tabs button {
    width: 32px;
}

.panel-tabs .selected {
    background: #fff;
}

.tools {
    display: flex;
    align-items: center;
    height: 32px;
    background: #fff;
}

.tools button {
    width: 24px;
    height: 24px;
    font-size: 16px;
}

.tools .narrow {
    width: 18px;
}

.panel-model .tools {
    padding-left: 6px;
}

.tools .pressed {
    border: 1px solid #a9afb0;
    background: #dcdede;
}

.tools .green {
    color: #4caa2c;
}

.faded {
    color: #ddd;
}

.blue {
    color: #1a86bd;
}

.grip {
    width: 2px;
    height: 14px;
    margin: 0 15px 0 2px;
    background: repeating-linear-gradient(#999 0 2px, #fff 2px 4px);
}

.sep {
    width: 1px;
    height: 24px;
    margin: 0 4px;
    background: #c4c8c8;
}

.sep.push {
    margin: 0 0 0 auto;
}

.search {
    display: flex;
    align-items: center;
    height: 29px;
    padding: 0 6px 0 4px;
    background: #fff;
}

.panel-model .search {
    padding: 0 11px 0 12px;
}

.search label {
    margin-right: 4px;
}

.search > button {
    margin-left: 6px;
}

.search > button:last-child {
    margin-left: 11px;
}

.field {
    display: flex;
    flex: 1;
    min-width: 0;
    height: 29px;
    border: 1px solid #a9b8ba;
}

.field input {
    flex: 1;
    min-width: 0;
    padding: 0 4px;
    border: 0;
    outline: 0;
    background: none;
    font: inherit;
}

.field button {
    width: 18px;
    color: #999;
    font-size: 18px;
}

/* 模型树 */
.tree {
    padding: 1px 0 0 4px;
}

.panel-model .tree {
    padding: 5px 0 0 12px;
}

.tree ul {
    padding-left: 20px;
}

.node {
    display: flex;
    align-items: center;
    gap: 4px;
    height: 22px;
}

.twist {
    width: 16px;
    margin-left: -20px;
}

.twist::before {
    content: "";
    border: 5px solid transparent;
    border-top: 8px solid #808080;
    border-bottom: 0;
}

.insert-here {
    position: relative;
    height: 2px;
    margin: 6px 5px 0 11px;
    background: #62c443;
}

.insert-here::before,
.insert-here::after {
    content: "";
    position: absolute;
    top: -2px;
    left: 0;
    border: 3px solid transparent;
    border-left-color: #62c443;
    border-right: 0;
}

.insert-here::after {
    right: 0;
    left: auto;
    border-right: 3px solid #62c443;
    border-left: 0;
}

/* 图形窗口 */
.viewport {
    position: relative;
    flex: 1;
    min-width: 0;
    overflow: hidden;
    background: #000;
}

.scene {
    width: 100%;
    height: 100%;
}

.cone-side {
    width: 420px;
    height: 470px;
    background: conic-gradient(from 0deg at 243px -445px, #154e69 172deg, #154e69 173deg, #185a7a 176deg, #1b6587 178deg, #1c6c93 180deg, #1f769f 183deg, #207ca9 186deg, #2283b0 188deg, #2388b9 191deg, #2388b9 194deg, #2180a8 197deg);
}

.view-tools {
    position: absolute;
    top: 7px;
    right: 0;
    display: flex;
    width: 441px;
    height: 36px;
    padding-left: 2px;
    overflow: hidden;
    border: 1px solid #b0bcbc;
    border-right: 0;
    background: #fff;
}

.view-tools button {
    flex: none;
    width: 30px;
}

.logo {
    position: absolute;
    right: 24px;
    bottom: 7px;
    width: 162px;
}

.logo-name {
    position: relative;
    margin-bottom: 2px;
    color: #f63;
    font: italic 300 38px/40px "Noto Sans CJK SC", sans-serif;
}

.flame {
    position: absolute;
    left: 64px;
    top: -17px;
    width: 20px;
    height: 44px;
}

.logo-site {
    color: #999;
    font: italic 16px/18px "DejaVu Sans", sans-serif;
}
```
